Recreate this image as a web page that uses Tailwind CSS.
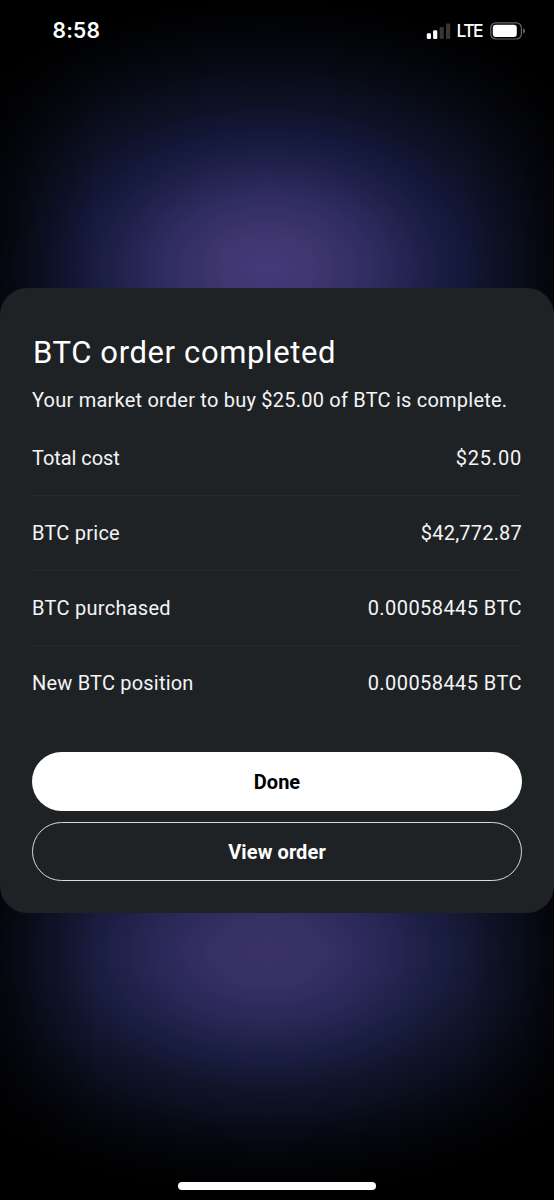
<!DOCTYPE html>
<html lang="en">
<head>
<meta charset="utf-8">
<meta name="viewport" content="width=device-width">
<title>BTC order completed</title>
<script src="https://cdn.jsdelivr.net/npm/@tailwindcss/browser@4"></script>
</head>
<body class="bg-black">
<div class="flex h-[1200px] w-[554px] flex-col overflow-hidden bg-black bg-[linear-gradient(90deg,rgba(0,0,0,0.55)_0%,rgba(0,0,0,0.22)_8%,transparent_18%,transparent_84%,rgba(0,0,0,0.2)_94%,rgba(0,0,0,0.5)_100%),radial-gradient(390px_270px_at_268px_268px,#45397a_0%,#403670_12%,#302d62_26%,#1e2049_40%,#14183a_50%,#0d1124_62%,#070a14_76%,#030408_88%,transparent_100%),radial-gradient(400px_245px_at_268px_952px,#3a3266_0%,#363063_14%,#292857_28%,#1b1e43_42%,#10152b_56%,#080b17_72%,#030408_86%,transparent_100%)] font-[Roboto,'Liberation_Sans',sans-serif] text-white">
  <!-- Status bar -->
  <header class="flex h-[288px] shrink-0 items-start justify-between pt-[19px] pr-[28px] pl-[52.5px]">
    <span class="font-[Inter,sans-serif] text-[21px] leading-[24px] font-semibold tracking-[0.2px]">8:58</span>
    <div class="flex h-[24px] items-center">
      <svg class="h-[18px] w-[26px]" viewBox="0 0 26 18">
        <rect x="0.8" y="11.2" width="4.2" height="5.8" rx="1.3" fill="#fff"/>
        <rect x="7.1" y="8.2" width="4.2" height="8.8" rx="1.3" fill="#fff"/>
        <rect x="13.6" y="5" width="4.2" height="12" rx="1.3" fill="#37373a"/>
        <rect x="20" y="1.6" width="4.2" height="15.4" rx="1.3" fill="#37373a"/>
      </svg>
      <span class="ml-[5px] font-[Inter,sans-serif] text-[17.5px] leading-[24px] font-medium tracking-[-1.6px]">LTE</span>
      <svg class="ml-[8px] h-[18px] w-[36px]" viewBox="0 0 36 18">
        <rect x="0.8" y="0.8" width="30.6" height="16.2" rx="5" fill="none" stroke="#68686b" stroke-width="1.2"/>
        <rect x="2.8" y="2.8" width="24" height="12.2" rx="3" fill="#fff"/>
        <path d="M33.2 6.2c2.3 1 2.3 4.4 0 5.4z" fill="#707073"/>
      </svg>
    </div>
  </header>

  <main class="flex h-[625px] shrink-0 flex-col rounded-[27px] bg-[#1f2225] px-8">
    <h1 class="mt-[45px] pl-px text-[31px] leading-[40px] tracking-[0.62px] whitespace-nowrap">BTC order completed</h1>
    <p class="mt-[13px] text-[20px] leading-[28px] tracking-[0.22px] whitespace-nowrap text-[#f4f4f5]">Your market order to buy $25.00 of BTC is complete.</p>
    <dl class="mt-[7px] text-[20px] leading-[28px] text-[#f4f4f5]">
      <div class="flex h-[75px] items-center justify-between border-b border-[#282c2f]"><dt class="tracking-[-0.05px]">Total cost</dt><dd class="tracking-[0.8px]">$25.00</dd></div>
      <div class="flex h-[75px] items-center justify-between border-b border-[#282c2f]"><dt class="tracking-[0.24px]">BTC price</dt><dd class="tracking-[0.2px]">$42,772.87</dd></div>
      <div class="flex h-[75px] items-center justify-between border-b border-[#282c2f]"><dt class="tracking-[0.28px]">BTC purchased</dt><dd class="tracking-[0.43px]">0.00058445 BTC</dd></div>
      <div class="flex h-[74px] items-center justify-between"><dt class="tracking-[0.2px]">New BTC position</dt><dd class="tracking-[0.43px]">0.00058445 BTC</dd></div>
    </dl>
    <button class="mt-[32px] h-[59px] shrink-0 rounded-full bg-white text-[20px] font-bold text-black">Done</button>
    <button class="mt-[11px] h-[59px] shrink-0 rounded-full border border-[#d8d9da] text-[20px] font-bold tracking-[0.1px]">View order</button>
  </main>

  <!-- Home indicator -->
  <footer class="flex grow items-end justify-center pb-[10px]">
    <div class="h-[8px] w-[198px] rounded-full bg-white"></div>
  </footer>
</div>
</body>
</html>
